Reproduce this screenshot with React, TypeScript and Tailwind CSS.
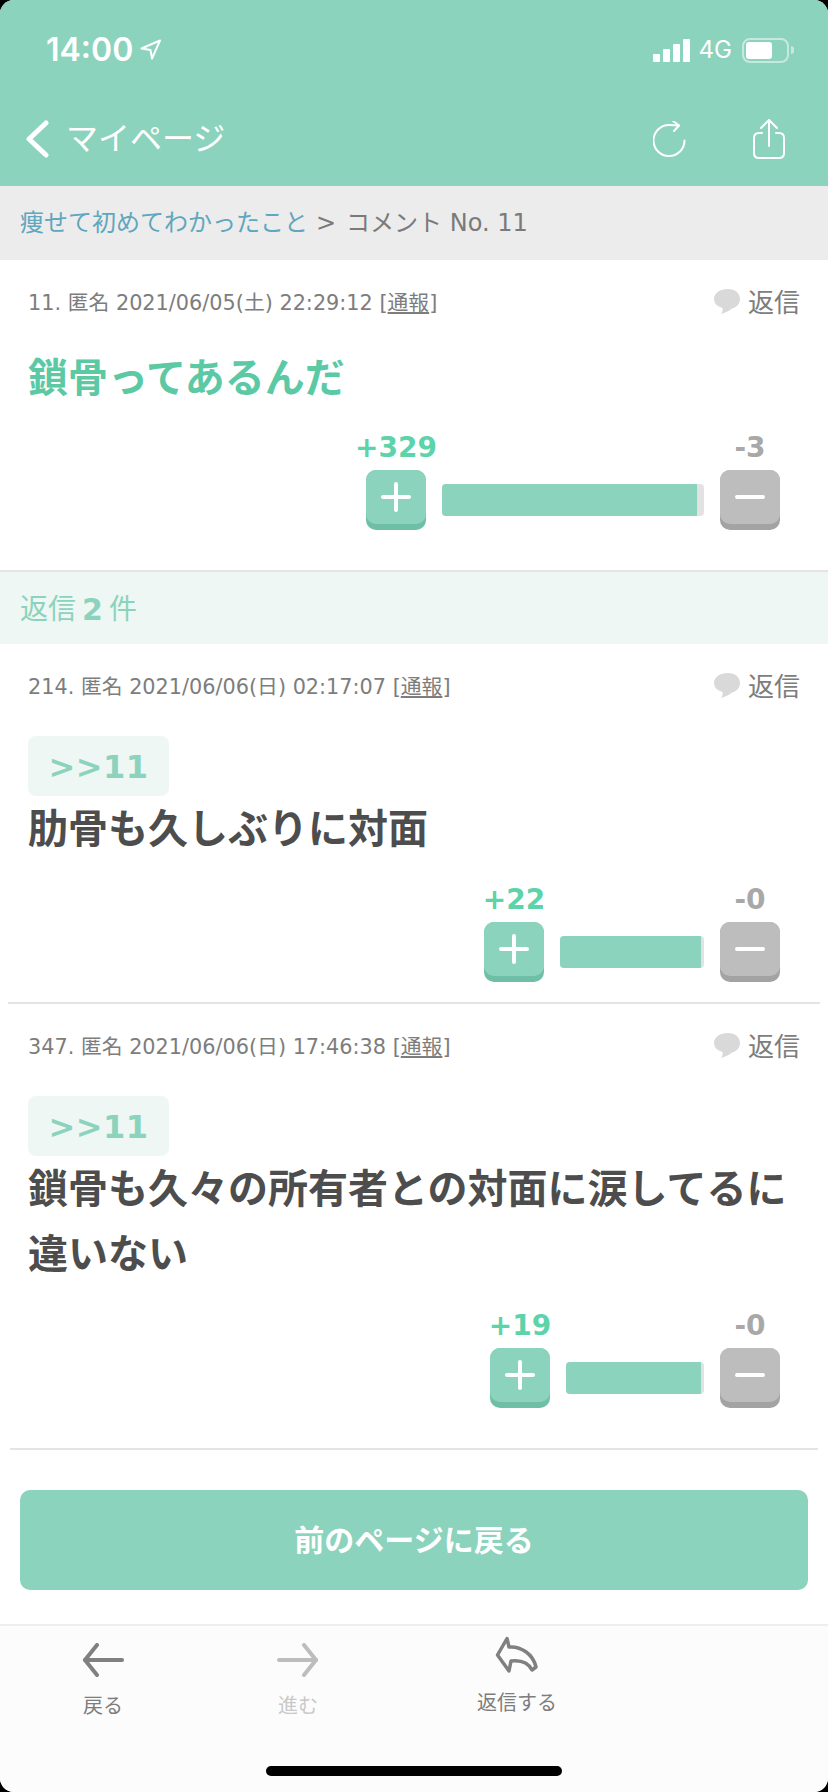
const sans = "font-['DejaVu_Sans','Noto_Sans_CJK_JP',sans-serif]"

function VoteButton({ kind, label }: { kind: "plus" | "minus"; label: string }) {
    const isPlus = kind === "plus"
    return <div className="flex flex-col items-center w-[60px]">
        <div className={`h-[34px] mb-[5px] leading-[34px] text-[28px] font-bold whitespace-nowrap ${isPlus ? "text-[#5CD3A9]" : "text-[#A8A8A8]"}`}>{label}</div>
        <div className={`w-[60px] h-[60px] rounded-[10px] ${isPlus ? "bg-[#6FBFA7]" : "bg-[#A3A3A3]"}`}>
            <div className={`w-[60px] h-[54px] rounded-[10px] flex items-center justify-center ${isPlus ? "bg-[#8CD3BE]" : "bg-[#BDBDBD]"}`}>
                <svg width="30" height="30" viewBox="0 0 30 30" fill="none" stroke="white" strokeWidth="4" strokeLinecap="round">
                    <path d="M2 15H28" />
                    {isPlus && <path d="M15 2V28" />}
                </svg>
            </div>
        </div>
    </div>
}

function VoteRow({ plus, minus, barWidth, fillWidth, className }: { plus: string; minus: string; barWidth: string; fillWidth: string; className: string }) {
    return <div className={`flex justify-end items-end pr-[48px] ${className}`}>
        <VoteButton kind="plus" label={plus} />
        <div className={`mx-4 mb-[14px] h-8 rounded-[4px] bg-[#E2E2E2] overflow-hidden ${barWidth}`}>
            <div className={`h-8 bg-[#8CD3BE] ${fillWidth}`} />
        </div>
        <VoteButton kind="minus" label={minus} />
    </div>
}

function MetaRow({ num, date }: { num: string; date: string }) {
    return <div className="flex justify-between items-center h-[30px] pl-7 pr-7">
        <div className="text-[20.8px] pt-[2px] text-[#7D7D7D] whitespace-nowrap">
            {num}. 匿名 {date} [<span className="underline">通報</span>]
        </div>
        <div className="flex items-center gap-2 text-[26px] text-[#7D7D7D]">
            <svg width="26" height="25" viewBox="0 0 26 25" className="mb-[3px]"><path d="M14 0C21 0 26 4 26 10C26 15 22.500 18.500 18 19.500C15 22 11 24 7 25C8.500 23 9 21 8.500 19C3.500 17.500 0 14.500 0 10C0 4 6 0 14 0Z" fill="#D9D9D9" /></svg>
            <span>返信</span>
        </div>
    </div>
}

function Badge() {
    return <div className="ml-7 mt-[34px] w-[141px] h-[60px] pt-px rounded-[8px] bg-[#EEF7F4] flex items-center justify-center text-[#8CD3BE] text-[32px] font-bold tracking-[0.5px]">&gt;&gt;11</div>
}

export default function App() {
    return <div className={`w-[828px] h-[1792px] bg-black ${sans}`}>
        <div className="w-[828px] h-[1792px] rounded-[14px] overflow-hidden bg-white flex flex-col">
            {/* status bar + nav */}
            <div className="h-[186px] bg-[#8CD3BE] text-white">
                <div className="flex items-center justify-between h-[50px] mt-[25px] pl-[46px] pr-[34px]">
                    <div className="flex items-center gap-[7px]">
                        <span className="text-[32px] font-semibold font-['Inter',sans-serif]">14:00</span>
                        <svg width="22" height="22" viewBox="0 0 22 22" fill="none" stroke="white" strokeWidth="2" strokeLinejoin="round"><path d="M20 1.500L1.500 9.500L10.500 11L12 19.500Z" /></svg>
                    </div>
                    <div className="flex items-center">
                        <div className="flex items-end gap-[3px] h-[23px]">
                            <div className="w-[7px] h-[8px] bg-white rounded-[1px]" />
                            <div className="w-[7px] h-[13px] bg-white rounded-[1px]" />
                            <div className="w-[7px] h-[18px] bg-white rounded-[1px]" />
                            <div className="w-[7px] h-[23px] bg-white rounded-[1px]" />
                        </div>
                        <span className="ml-[9px] text-[24px] font-['Inter',sans-serif]">4G</span>
                        <div className="ml-[10px] w-[47px] h-[25px] rounded-[8px] border-2 border-white/50 p-[2px]">
                            <div className="w-[26px] h-[17px] bg-white rounded-[3px]" />
                        </div>
                        <div className="ml-[2px] w-[3px] h-[8px] rounded-r-[3px] bg-white/50" />
                    </div>
                </div>
                <div className="flex items-center justify-between h-[60px] mt-[34px] pl-[25px] pr-[43px]">
                    <div className="flex items-center">
                        <svg width="24" height="38" viewBox="0 0 24 38" fill="none" stroke="white" strokeWidth="5" strokeLinecap="round" strokeLinejoin="round"><path d="M21 3L4 19L21 35" /></svg>
                        <span className="ml-[17px] text-[32px]">マイページ</span>
                    </div>
                    <div className="flex items-center gap-[66px]">
                        <svg width="34" height="36" viewBox="0 0 34 36" fill="none" stroke="white" strokeWidth="2" strokeLinecap="round" strokeLinejoin="round"><path d="M26 4.500Q21 4 16 4A15.500 15.500 0 1 0 31.500 19.500" /><path d="M20 0L26 4.500L21 10" /></svg>
                        <svg width="32" height="40" viewBox="0 0 32 40" fill="none" stroke="white" strokeWidth="2" strokeLinecap="round" strokeLinejoin="round"><path d="M9 14H6C3 14 1 16 1 19V34C1 37 3 39 6 39H26C29 39 31 37 31 34V19C31 16 29 14 26 14H23" /><path d="M16 1V27" /><path d="M8 9L16 1L24 9" /></svg>
                    </div>
                </div>
            </div>

            {/* breadcrumb */}
            <div className="h-[74px] bg-[#ECECEC] flex items-center pl-5 text-[24px] text-[#7A7A7A] whitespace-nowrap">
                <span className="text-[#5FA6BE]">痩せて初めてわかったこと</span>
                <span className="ml-2">&gt;</span>
                <span className="ml-[10px]">コメント No. 11</span>
            </div>

            {/* main comment */}
            <div className="h-[312px] border-b-2 border-[#E4E4E4] pt-7">
                <MetaRow num="11" date="2021/06/05(土) 22:29:12" />
                <div className="mt-7 pl-7 text-[40px] leading-[65px] font-bold text-[#5CC9A5]">鎖骨ってあるんだ</div>
                <VoteRow plus="+329" minus="-3" barWidth="w-[262px]" fillWidth="w-[255px]" className="mt-5" />
            </div>

            <div className="h-[72px] bg-[#EEF7F4] flex items-center pl-5 pt-[3px] text-[28px] text-[#8CD3BE]">
                <span>返信</span>
                <span className="mx-[6px] font-bold text-[30px]">2</span>
                <span>件</span>
            </div>

            {/* replies */}
            <div className="pt-7">
                <MetaRow num="214" date="2021/06/06(日) 02:17:07" />
                <Badge />
                <div className="pl-7 mt-px text-[40px] leading-[65px] font-bold text-[#4D4D4D]">肋骨も久しぶりに対面</div>
                <VoteRow plus="+22" minus="-0" barWidth="w-[144px]" fillWidth="w-[141px]" className="mt-[21px]" />
                <div className="mt-5 mx-2 h-[2px] bg-[#E4E4E4]" />
            </div>
            <div className="pt-7">
                <MetaRow num="347" date="2021/06/06(日) 17:46:38" />
                <Badge />
                <div className="pl-7 pr-5 mt-px text-[40px] leading-[65px] font-bold text-[#4D4D4D]">鎖骨も久々の所有者との対面に涙してるに違いない</div>
                <VoteRow plus="+19" minus="-0" barWidth="w-[138px]" fillWidth="w-[135px]" className="mt-[22px]" />
                <div className="mt-10 mx-[10px] h-[2px] bg-[#E4E4E4]" />
            </div>

            <div className="mt-10 mx-5 h-[100px] rounded-[10px] bg-[#8CD3BE] flex items-center justify-center text-white text-[30px] font-bold">前のページに戻る</div>

            {/* toolbar */}
            <div className="mt-[34px] flex-1 bg-[#FCFCFC] border-t-2 border-[#EEEEEE] flex flex-col">
                <div className="flex h-[120px] text-[20px]">
                    <div className="w-[196px] ml-[5px] pt-[17px] flex flex-col items-center text-[#7D7D7D]">
                        <svg width="42" height="34" viewBox="0 0 42 34" fill="none" stroke="#808080" strokeWidth="4" strokeLinecap="round" strokeLinejoin="round"><path d="M40 17H3" /><path d="M15 2L3 17L15 32" /></svg>
                        <div className="mt-[14px]">戻る</div>
                    </div>
                    <div className="w-[194px] pt-[17px] flex flex-col items-center text-[#C9C9C9]">
                        <svg width="42" height="34" viewBox="0 0 42 34" fill="none" stroke="#BDBDBD" strokeWidth="4" strokeLinecap="round" strokeLinejoin="round"><path d="M2 17H39" /><path d="M27 2L39 17L27 32" /></svg>
                        <div className="mt-[14px]">進む</div>
                    </div>
                    <div className="w-[250px] ml-[-3px] pt-[10px] flex flex-col items-center text-[#7D7D7D]">
                        <svg width="44" height="38" viewBox="0 0 44 38" fill="none" stroke="#808080" strokeWidth="3.500" strokeLinecap="round" strokeLinejoin="round"><path d="M2.500 19L12 2.500L14 11C26 10 38 18 41 31L37 34C33 26 25 24 16 25L14 35Z" /></svg>
                        <div className="mt-[14px]">返信する</div>
                    </div>
                </div>
                <div className="mt-5 mx-auto w-[296px] h-[10px] rounded-full bg-black" />
            </div>
        </div>
    </div>
}
